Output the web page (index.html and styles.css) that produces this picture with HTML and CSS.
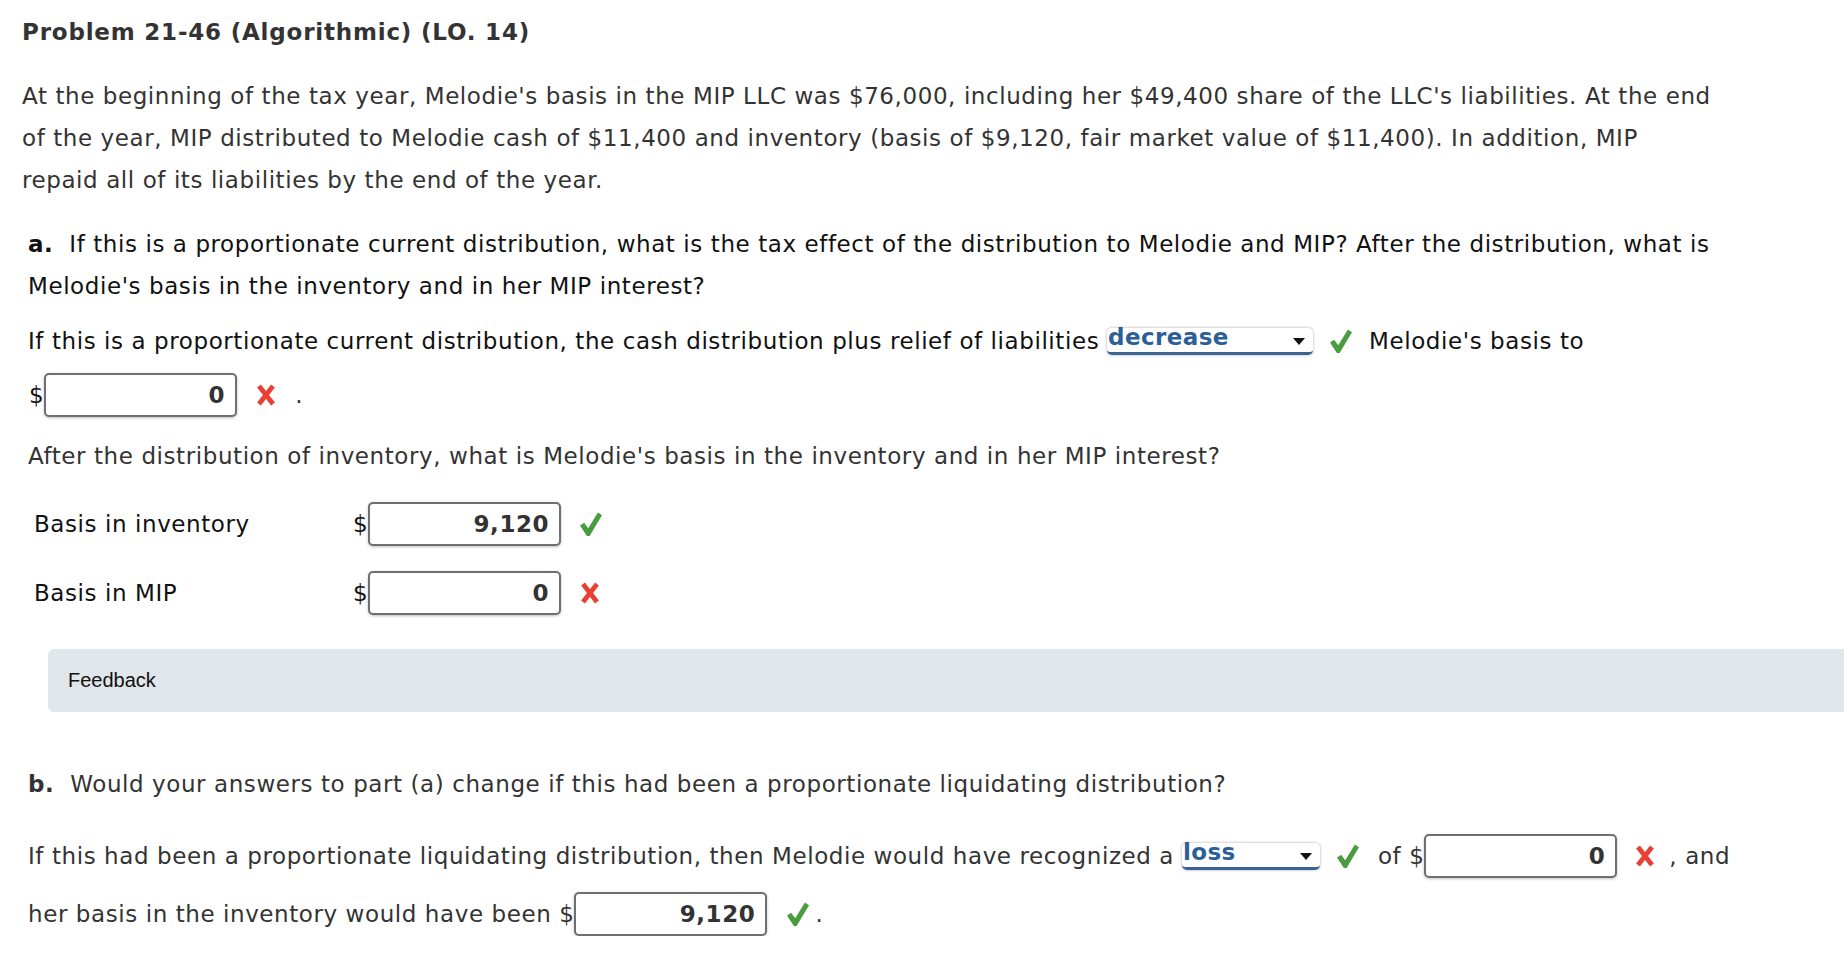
FILE: index.html
```html
<!DOCTYPE html>
<html lang="en">
<head>
<meta charset="utf-8">
<title>Problem 21-46</title>
<link rel="stylesheet" href="styles.css">
</head>
<body>
<div class="page">
  <h1 class="title">Problem 21-46 (Algorithmic) (LO. 14)</h1>

  <p class="intro">At the beginning of the tax year, Melodie's basis in the MIP LLC was $76,000, including her $49,400 share of the LLC's liabilities. At the end<br>of the year, MIP distributed to Melodie cash of $11,400 and inventory (basis of $9,120, fair market value of $11,400). In addition, MIP<br>repaid all of its liabilities by the end of the year.</p>

  <p class="question dark"><b class="label">a.</b> If this is a proportionate current distribution, what is the tax effect of the distribution to Melodie and MIP? After the distribution, what is<br>Melodie's basis in the inventory and in her MIP interest?</p>

  <div class="line dark answer-a">
    <span>If this is a proportionate current distribution, the cash distribution plus relief of liabilities&nbsp;</span>
    <span class="select sel-decrease"><span class="sel-text">decrease</span><span class="arrow"></span></span>
    <svg class="icon check" viewBox="0 0 24 26"><path d="M0 14 L4.5 11 L9 17 L19.5 0 L24 3 L10.5 25.5 L7.5 25.5 Z"/></svg>
    <span>Melodie's basis to</span>
  </div>

  <div class="line input-line dollar-a">
    <span class="dark">$</span><span class="field">0</span>
    <svg class="icon cross" viewBox="0 0 20 22"><path d="M3 2 L17 20 M17 2 L3 20"/></svg>
    <span class="period">.</span>
  </div>

  <p class="question after">After the distribution of inventory, what is Melodie's basis in the inventory and in her MIP interest?</p>

  <div class="basis-table dark">
    <div class="basis-row">
      <span class="basis-label">Basis in inventory</span>
      <span>$</span><span class="field">9,120</span>
      <svg class="icon check" viewBox="0 0 24 26"><path d="M0 14 L4.5 11 L9 17 L19.5 0 L24 3 L10.5 25.5 L7.5 25.5 Z"/></svg>
    </div>
    <div class="basis-row">
      <span class="basis-label">Basis in MIP</span>
      <span>$</span><span class="field">0</span>
      <svg class="icon cross" viewBox="0 0 20 22"><path d="M3 2 L17 20 M17 2 L3 20"/></svg>
    </div>
  </div>

  <div class="feedback">Feedback</div>

  <p class="question part-b"><b class="label">b.</b> Would your answers to part (a) change if this had been a proportionate liquidating distribution?</p>

  <div class="line input-line liq-row">
    <span>If this had been a proportionate liquidating distribution, then Melodie would have recognized a&nbsp;</span>
    <span class="select sel-loss"><span class="sel-text">loss</span><span class="arrow"></span></span>
    <svg class="icon check" viewBox="0 0 24 26"><path d="M0 14 L4.5 11 L9 17 L19.5 0 L24 3 L10.5 25.5 L7.5 25.5 Z"/></svg>
    <span class="of">of $</span><span class="field">0</span>
    <svg class="icon cross" viewBox="0 0 20 22"><path d="M3 2 L17 20 M17 2 L3 20"/></svg>
    <span class="comma">, and</span>
  </div>

  <div class="line input-line inv-row">
    <span>her basis in the inventory would have been $</span><span class="field">9,120</span>
    <svg class="icon check" viewBox="0 0 24 26"><path d="M0 14 L4.5 11 L9 17 L19.5 0 L24 3 L10.5 25.5 L7.5 25.5 Z"/></svg>
    <span class="period">.</span>
  </div>
</div>
</body>
</html>
```

FILE: styles.css
```css
* { box-sizing: border-box; }

html, body {
  margin: 0;
  padding: 0;
  background: #fff;
}

.page {
  padding: 11px 0 0 22px;
  font-family: "DejaVu Sans", Verdana, sans-serif;
  font-size: 23px;
  letter-spacing: 0.58px;
  color: #333;
  overflow: hidden;
}

.dark { color: #111; }

.title {
  margin: 0;
  font-size: 23px;
  letter-spacing: 0.8px;
  font-weight: bold;
  line-height: 42px;
  color: #333;
}

.intro {
  margin: 22px 0 0;
  line-height: 42px;
  white-space: nowrap;
}

.question {
  margin: 22px 0 0 6px;
  line-height: 42px;
  white-space: nowrap;
}

.label { margin-right: 8px; }

.line {
  display: flex;
  align-items: center;
  white-space: nowrap;
  margin-left: 6px;
}

.answer-a {
  margin-top: 13px;
  height: 42px;
}

.input-line { height: 44px; }

.dollar-a {
  margin-top: 11px;
  margin-left: 7px;
}

.question.after { margin-top: 18px; }

.select {
  display: inline-flex;
  align-items: flex-start;
  justify-content: space-between;
  height: 27px;
  background: #fff;
  border-radius: 5px;
  border-bottom: 3px solid #3a6493;
  box-shadow: 0 0 3px rgba(0, 0, 0, 0.35);
  color: #2c5f99;
  font-weight: bold;
  letter-spacing: 0.4px;
  padding: 0 8px 0 1px;
}

.sel-text {
  line-height: 24px;
  margin-top: -3px;
}

.sel-decrease { width: 206px; }
.sel-loss { width: 138px; }

.arrow {
  width: 0;
  height: 0;
  margin-top: 10px;
  border-left: 6px solid transparent;
  border-right: 6px solid transparent;
  border-top: 7px solid #111;
}

.icon { flex: none; }

.check {
  width: 22px;
  height: 25px;
  margin: 0 17px;
  fill: #4a9c40;
}

.cross {
  width: 20px;
  height: 22px;
  margin: 0 0 0 19px;
  stroke: #ea3f33;
  stroke-width: 4.8;
  fill: none;
}

.field {
  display: inline-block;
  width: 193px;
  height: 44px;
  border: 2px solid #6f6f6f;
  border-radius: 5px;
  box-shadow: 0 1px 3px rgba(0, 0, 0, 0.25);
  background: #fff;
  text-align: right;
  padding-right: 10px;
  font-weight: bold;
  letter-spacing: 0.6px;
  color: #333;
  line-height: 40px;
}

.period { margin-left: 19px; }

.basis-table {
  margin: 25px 0 0 12px;
  display: flex;
  flex-direction: column;
  gap: 25px;
}

.basis-row {
  display: flex;
  align-items: center;
  height: 44px;
}

.basis-label { width: 319px; }

.basis-row .check { margin-left: 19px; }

.feedback {
  margin: 34px 0 0 26px;
  height: 63px;
  background: #e0e6ea;
  border-radius: 6px 0 0 6px;
  display: flex;
  align-items: center;
  padding-left: 20px;
  font-family: "Liberation Sans", Arial, Helvetica, sans-serif;
  font-size: 20px;
  letter-spacing: 0;
  color: #111;
}

.question.part-b { margin-top: 51px; }

.liq-row { margin-top: 29px; }

.liq-row .of { margin-left: 2px; }

.liq-row .cross { margin-left: 18px; }

.comma { margin-left: 14px; }

.inv-row { margin-top: 14px; }

.inv-row .check { margin-left: 20px; margin-right: 0; }

.inv-row .period { margin-left: 6px; }
```
